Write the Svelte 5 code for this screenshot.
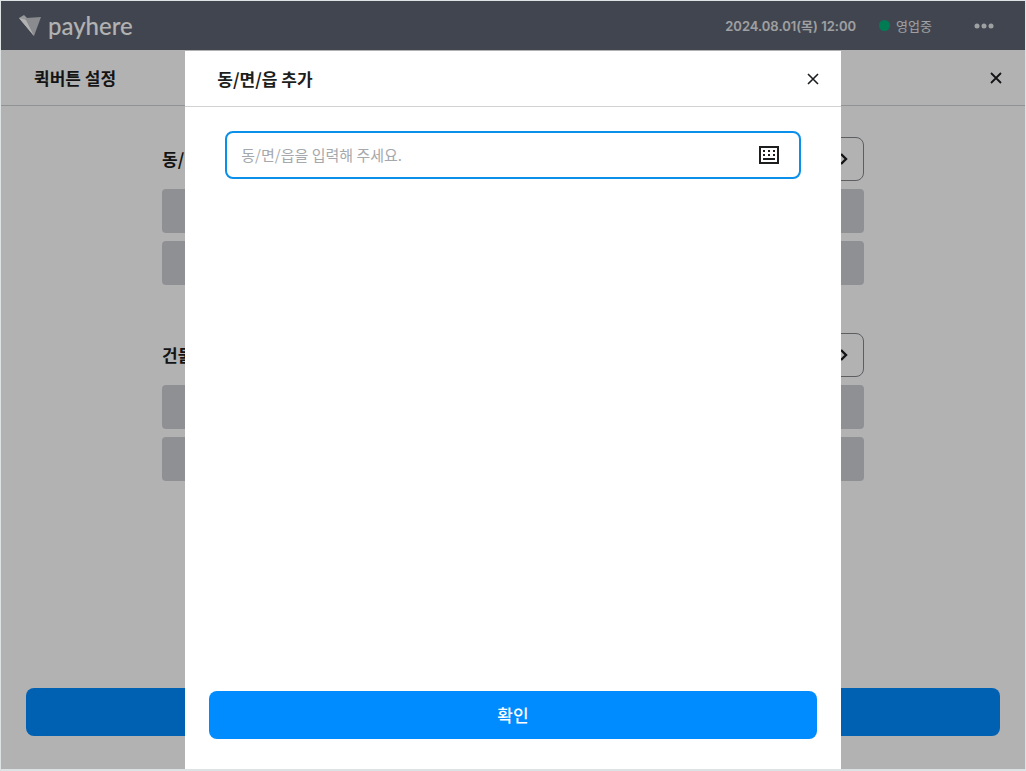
<script>
  const sections = [
    { id: 'town', title: '동/면/읍', tiles: 8 },
    { id: 'building', title: '건물', tiles: 8 }
  ];

  let showModal = true;
  let keyword = '';

  function closeModal() {
    showModal = false;
  }

  function openModal() {
    keyword = '';
    showModal = true;
  }
</script>

<div class="app">
  <header class="topbar">
    <a class="logo" href="#home">
      <svg width="22" height="22" viewBox="0 0 22 22" aria-hidden="true">
        <path d="M0 3L5 0L8 3L7 6Z" fill="#d8dade" />
        <path d="M0 3L8 6L15 21Z" fill="#f4f5f6" />
        <path d="M7 3L22 2L15 21L6 6Z" fill="#c4c7cc" />
        <path d="M0 3L7 5L15 21Z" fill="#fff" />
      </svg>
      <span>payhere</span>
    </a>
    <div class="status">
      <time datetime="2024-08-01T12:00">2024.08.01(목) 12:00</time>
      <span class="open"><i class="dot"></i>영업중</span>
      <button class="icon-btn more" aria-label="더보기">
        <svg width="20" height="6" viewBox="0 0 20 6" fill="currentColor">
          <circle cx="3" cy="3" r="2.5" />
          <circle cx="10" cy="3" r="2.5" />
          <circle cx="17" cy="3" r="2.5" />
        </svg>
      </button>
    </div>
  </header>

  <div class="page-head">
    <h1>퀵버튼 설정</h1>
    <button class="icon-btn" aria-label="닫기">
      <svg width="12" height="12" viewBox="0 0 12 12" fill="none" stroke="currentColor" stroke-width="1.8">
        <path d="M1 1L11 11M11 1L1 11" />
      </svg>
    </button>
  </div>

  <main>
    {#each sections as section}
      <section class="group" aria-labelledby={section.id}>
        <div class="group-head">
          <h2 id={section.id}>{section.title}</h2>
          <button class="add" aria-label="{section.title} 추가" on:click={openModal}>
            <svg width="10" height="12" viewBox="0 0 10 12" fill="none" stroke="currentColor" stroke-width="2.4">
              <path d="M3 1L8 6L3 11" />
            </svg>
          </button>
        </div>
        <div class="tiles">
          {#each Array(section.tiles) as _}
            <div class="tile"></div>
          {/each}
        </div>
      </section>
    {/each}
  </main>

  <footer>
    <button class="primary" aria-label="저장"></button>
  </footer>

  {#if showModal}
    <div class="overlay">
      <div class="modal" role="dialog" aria-modal="true" aria-labelledby="modal-title">
        <div class="modal-head">
          <h2 id="modal-title">동/면/읍 추가</h2>
          <button class="icon-btn" aria-label="닫기" on:click={closeModal}>
            <svg width="12" height="12" viewBox="0 0 12 12" fill="none" stroke="currentColor" stroke-width="1.6">
              <path d="M1 1L11 11M11 1L1 11" />
            </svg>
          </button>
        </div>

        <div class="modal-body">
          <div class="field">
            <input
              type="text"
              aria-label="동/면/읍"
              placeholder="동/면/읍을 입력해 주세요."
              bind:value={keyword}
            />
            <button class="icon-btn" aria-label="키보드">
              <svg width="20" height="18" viewBox="0 0 20 18" fill="currentColor">
                <path d="M1 1H19V17H1Z" fill="none" stroke="currentColor" stroke-width="2" />
                <path d="M4 4h2v2H4zM9 4h2v2H9zM14 4h2v2h-2zM4 8h2v2H4zM9 8h2v2H9zM14 8h2v2h-2zM4 12h12v2H4z" />
              </svg>
            </button>
          </div>
        </div>

        <div class="modal-foot">
          <button class="primary" on:click={closeModal}>확인</button>
        </div>
      </div>
    </div>
  {/if}
</div>

<style>
  :global(body) {
    margin: 0;
    background: #e2e6e9;
  }

  .app {
    position: relative;
    display: flex;
    flex-direction: column;
    box-sizing: border-box;
    min-height: 100vh;
    border: 1px solid #dde2e5;
    border-bottom-width: 2px;
    background: #fff;
    color: #1d1e20;
    font-family: 'Noto Sans CJK KR', 'Noto Sans', sans-serif;
  }

  h1,
  h2 {
    margin: 0;
    font-size: 17px;
    line-height: 24px;
    font-weight: 700;
  }

  button {
    font-family: inherit;
    cursor: pointer;
  }

  .icon-btn {
    display: flex;
    align-items: center;
    justify-content: center;
    padding: 0;
    border: 0;
    background: none;
    color: inherit;
  }

  .topbar {
    display: flex;
    align-items: center;
    justify-content: space-between;
    height: 49px;
    padding: 0 31px 0 18px;
    background: #5e6471;
    color: #fff;
  }

  .logo {
    display: flex;
    align-items: center;
    gap: 7px;
    color: inherit;
    font-family: Lato, sans-serif;
    font-size: 24px;
    line-height: 28px;
    font-weight: 500;
    text-decoration: none;
  }

  .status {
    display: flex;
    align-items: center;
    font-size: 13px;
    line-height: 20px;
    color: #e4e5e8;
  }

  time {
    font-family: Inter, 'Noto Sans CJK KR', sans-serif;
    font-weight: 600;
  }

  .open {
    display: flex;
    align-items: center;
    gap: 6px;
    margin-left: 23px;
  }

  .dot {
    width: 11px;
    height: 11px;
    border-radius: 50%;
    background: #00b078;
  }

  .more {
    margin-left: 42px;
  }

  .page-head {
    display: flex;
    align-items: center;
    justify-content: space-between;
    height: 55px;
    padding: 0 23px 0 33px;
    border-bottom: 1px solid #d0d2d4;
  }

  main {
    flex: 1;
    display: flex;
    flex-direction: column;
    gap: 48px;
    padding: 31px 161px;
  }

  .group-head {
    display: flex;
    align-items: center;
    justify-content: space-between;
    margin-bottom: 8px;
  }

  .add {
    display: flex;
    align-items: center;
    justify-content: flex-end;
    width: 96px;
    height: 44px;
    padding: 0 15px;
    border: 1px solid #84878c;
    border-radius: 8px;
    background: #fff;
    color: #1d1e20;
  }

  .tiles {
    display: grid;
    grid-template-columns: repeat(4, 1fr);
    gap: 8px;
  }

  .tile {
    height: 44px;
    border-radius: 4px;
    background: #cccfd4;
  }

  footer {
    padding: 24px 25px 33px;
  }

  .primary {
    display: block;
    width: 100%;
    height: 48px;
    padding: 0;
    border: 0;
    border-radius: 8px;
    background: #008cff;
    color: #fff;
    font-size: 17px;
    line-height: 24px;
    font-weight: 500;
  }

  .overlay {
    position: absolute;
    inset: 0;
    display: flex;
    justify-content: center;
    padding-top: 50px;
    background: rgba(0, 0, 0, 0.3);
  }

  .modal {
    display: flex;
    flex-direction: column;
    width: 64%;
    background: #fff;
  }

  .modal-head {
    display: flex;
    align-items: center;
    justify-content: space-between;
    height: 55px;
    padding: 0 22px 0 32px;
    border-bottom: 1px solid #d0d2d4;
  }

  .modal-body {
    flex: 1;
    padding: 24px 40px;
  }

  .field {
    display: flex;
    align-items: center;
    height: 44px;
    padding: 0 20px 0 14px;
    border: 2px solid #0a90ea;
    border-radius: 8px;
  }

  .field input {
    flex: 1;
    min-width: 0;
    padding: 0;
    border: 0;
    outline: 0;
    background: none;
    color: inherit;
    font-family: inherit;
    font-size: 15px;
    line-height: 24px;
  }

  .field input::placeholder {
    color: #a5a8ac;
    opacity: 1;
  }

  .modal-foot {
    padding: 24px 24px 30px;
  }
</style>
